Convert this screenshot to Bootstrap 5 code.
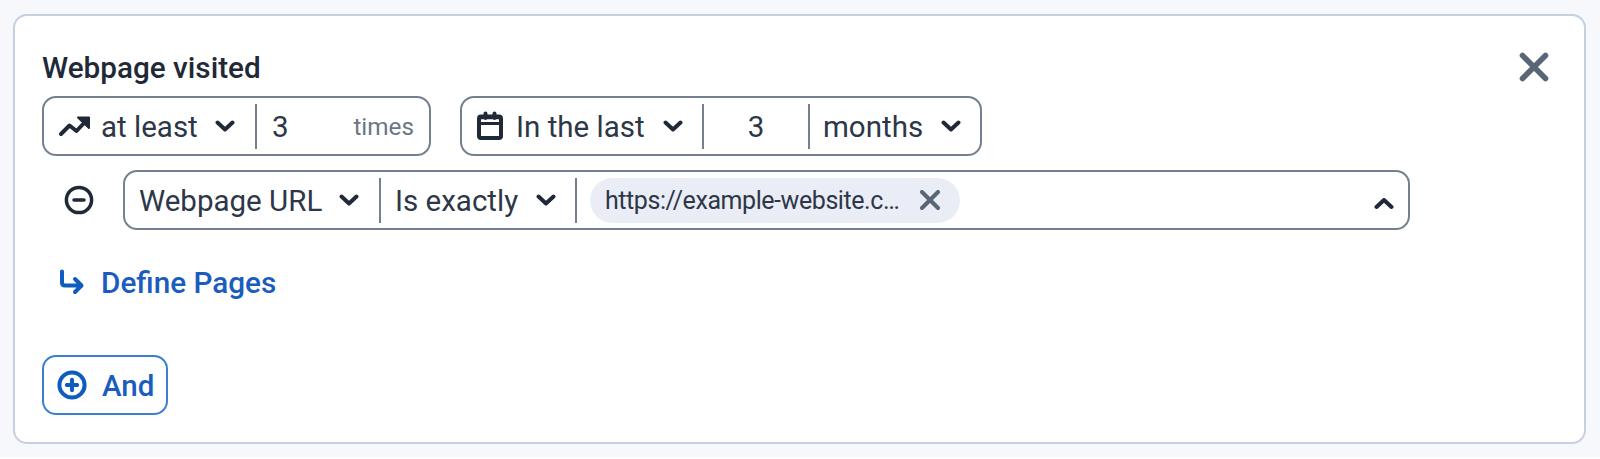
<!DOCTYPE html>
<html lang="en">
<head>
    <meta charset="UTF-8">
    <meta name="viewport" content="width=device-width, initial-scale=1.0">
    <title>Webpage visited</title>
    <link href="https://cdn.jsdelivr.net/npm/bootstrap@5.3.3/dist/css/bootstrap.min.css" rel="stylesheet">
    <script src="https://cdn.jsdelivr.net/npm/bootstrap@5.3.3/dist/js/bootstrap.bundle.min.js"></script>
    <style>
        body {
            font-family: Roboto, "Liberation Sans", sans-serif;
            font-size: 29.5px;
            line-height: 36px;
            color: #2d3748;
            background: #fff;
            overflow: hidden;
        }
        svg {
            display: block;
            flex-shrink: 0;
            fill: none;
            stroke: #1f2937;
            stroke-width: 4;
            stroke-linecap: round;
            stroke-linejoin: round;
        }
        .page-area {
            height: 457px;
            padding: 14px 14px 12px 13px;
            background: #f7f8fc;
        }
        .rule-card {
            height: 430px;
            padding: 32px 35px 0 27px;
            border: 2px solid #c5d0e0;
            border-radius: 14px;
        }
        .rule-title {
            height: 48px;
            padding: 2px 0 0 0;
            font-size: 29.7px;
            line-height: 36px;
            font-weight: 500;
            color: #1f2937;
        }
        .field-group {
            height: 60px;
            border: 2px solid #75808f;
            border-radius: 14px;
            background: #fff;
        }
        .field-part {
            height: 45px;
            border: 0;
            padding: 0;
            background: none;
            color: inherit;
            white-space: nowrap;
        }
        .field-part + .field-part {
            border-left: 2px solid #75808f;
        }
        .field-part span {
            flex-shrink: 0;
            padding-top: 2px;
            text-align: left;
        }
        .part-trend { width: 211px; padding-left: 14px; }
        .part-trend span { width: 124px; padding-left: 10px; }
        .part-count { width: 174px; padding: 0 15px 0 15px; }
        .part-calendar { width: 240px; padding-left: 14px; }
        .part-calendar span { width: 159px; padding-left: 12px; }
        .part-number { width: 106px; }
        .part-months { width: 172px; padding-left: 13px; }
        .part-months span { width: 118px; }
        .part-url { width: 254px; padding-left: 14px; }
        .part-url span { width: 200px; }
        .part-match { width: 196px; padding-left: 14px; }
        .part-match span { width: 141px; }
        .part-value { width: 833px; padding: 0 14px 0 13px; }
        .chevron { margin-bottom: 1px; }
        .field-part .unit-text { font-size: 24.3px; color: #6b7686; }
        .url-pill {
            width: 370px;
            height: 45px;
            padding: 0 20px 0 15px;
            border-radius: 23px;
            background: #eaedf6;
            font-size: 25px;
            letter-spacing: -.43px;
        }
        .condition-row { margin: 14px 0 0 22px; gap: 29px; }
        .pages-link, .and-btn {
            font-weight: 500;
            color: #1a5dbe;
        }
        .pages-link { margin: 33px 0 0 17px; gap: 16px; font-size: 29.7px; }
        .pages-link span, .and-btn span { padding-top: 2px; }
        .pages-link svg, .and-btn svg { stroke: #0f5cc0; }
        .and-btn {
            width: 126px;
            height: 60px;
            margin-top: 54px;
            padding: 0 0 0 13px;
            gap: 15px;
            border: 2px solid #3c7fd2;
            border-radius: 14px;
            background: #fff;
        }
        .x-icon { stroke: #596676; }
        .x-large { margin-top: 4px; stroke-width: 5.6; }
        .ring-icon { stroke-width: 3.5; }
        .arrow-head { fill: #1f2937; stroke-width: 2; }
        .thin-line { stroke-width: 3; }
    </style>
</head>
<body>
<div class="page-area">
    <div class="card rule-card">
        <div class="d-flex justify-content-between align-items-start">
            <h2 class="rule-title mb-0">Webpage visited</h2>
            <button type="button" class="border-0 bg-transparent p-0" aria-label="Remove">
                <svg class="x-icon x-large" width="30" height="30" viewBox="0 0 30 30"><path d="M3.5 3.5 26.5 26.5M26.5 3.5 3.5 26.5"/></svg>
            </button>
        </div>

        <!-- how often and when -->
        <div class="d-flex" style="gap:29px">
            <div class="field-group d-flex align-items-center">
                <button type="button" class="field-part part-trend d-flex align-items-center">
                    <svg class="chevron" width="33" height="22" viewBox="0 0 33 22"><path d="M3 19 11.5 10.5 18.5 16 27 7"/><path class="arrow-head" d="M20 2.5H31V13Z"/></svg>
                    <span>at least</span>
                    <svg class="chevron" width="20" height="12" viewBox="0 0 20 12"><path d="M2.5 2.5 10 9.5 17.5 2.5"/></svg>
                </button>
                <div class="field-part part-count d-flex align-items-center justify-content-between">
                    <span>3</span>
                    <span class="unit-text">times</span>
                </div>
            </div>
            <div class="field-group d-flex align-items-center">
                <button type="button" class="field-part part-calendar d-flex align-items-center">
                    <svg width="28" height="30" viewBox="0 0 28 30"><rect x="3" y="5.5" width="22" height="21.5" rx="2"/><path class="thin-line" d="M3 12.5H25"/><path d="M9.5 2.5V7M18.5 2.5V7M4 6.3H24"/></svg>
                    <span>In the last</span>
                    <svg class="chevron" width="20" height="12" viewBox="0 0 20 12"><path d="M2.5 2.5 10 9.5 17.5 2.5"/></svg>
                </button>
                <div class="field-part part-number d-flex align-items-center justify-content-center">
                    <span>3</span>
                </div>
                <button type="button" class="field-part part-months d-flex align-items-center">
                    <span>months</span>
                    <svg class="chevron" width="20" height="12" viewBox="0 0 20 12"><path d="M2.5 2.5 10 9.5 17.5 2.5"/></svg>
                </button>
            </div>
        </div>

        <!-- url condition -->
        <div class="condition-row d-flex align-items-center">
            <svg class="ring-icon" width="30" height="30" viewBox="0 0 30 30"><circle cx="15" cy="15" r="12.6"/><path d="M10 15H20"/></svg>
            <div class="field-group d-flex align-items-center">
                <button type="button" class="field-part part-url d-flex align-items-center">
                    <span>Webpage URL</span>
                    <svg class="chevron" width="20" height="12" viewBox="0 0 20 12"><path d="M2.5 2.5 10 9.5 17.5 2.5"/></svg>
                </button>
                <button type="button" class="field-part part-match d-flex align-items-center">
                    <span>Is exactly</span>
                    <svg class="chevron" width="20" height="12" viewBox="0 0 20 12"><path d="M2.5 2.5 10 9.5 17.5 2.5"/></svg>
                </button>
                <div class="field-part part-value d-flex align-items-center justify-content-between">
                    <div class="url-pill d-flex align-items-center justify-content-between">
                        <span>https://example-website.c…</span>
                        <svg class="x-icon" width="20" height="20" viewBox="0 0 20 20"><path d="M2 2 18 18M18 2 2 18"/></svg>
                    </div>
                    <svg class="mt-2" width="20" height="12" viewBox="0 0 20 12"><path d="M2.5 9 10 2 17.5 9"/></svg>
                </div>
            </div>
        </div>

        <a href="#" class="pages-link d-flex align-items-center text-decoration-none">
            <svg width="26" height="26" viewBox="0 0 26 26"><path d="M3 2.5V13.5Q3 16.5 6 16.5H22M16 10 22.5 16.5 16 23"/></svg>
            <span>Define Pages</span>
        </a>

        <button type="button" class="and-btn d-flex align-items-center">
            <svg width="30" height="30" viewBox="0 0 30 30"><circle cx="15" cy="15" r="12.6"/><path d="M9.8 15H20.2M15 9.8V20.2"/></svg>
            <span>And</span>
        </button>
    </div>
</div>
</body>
</html>
